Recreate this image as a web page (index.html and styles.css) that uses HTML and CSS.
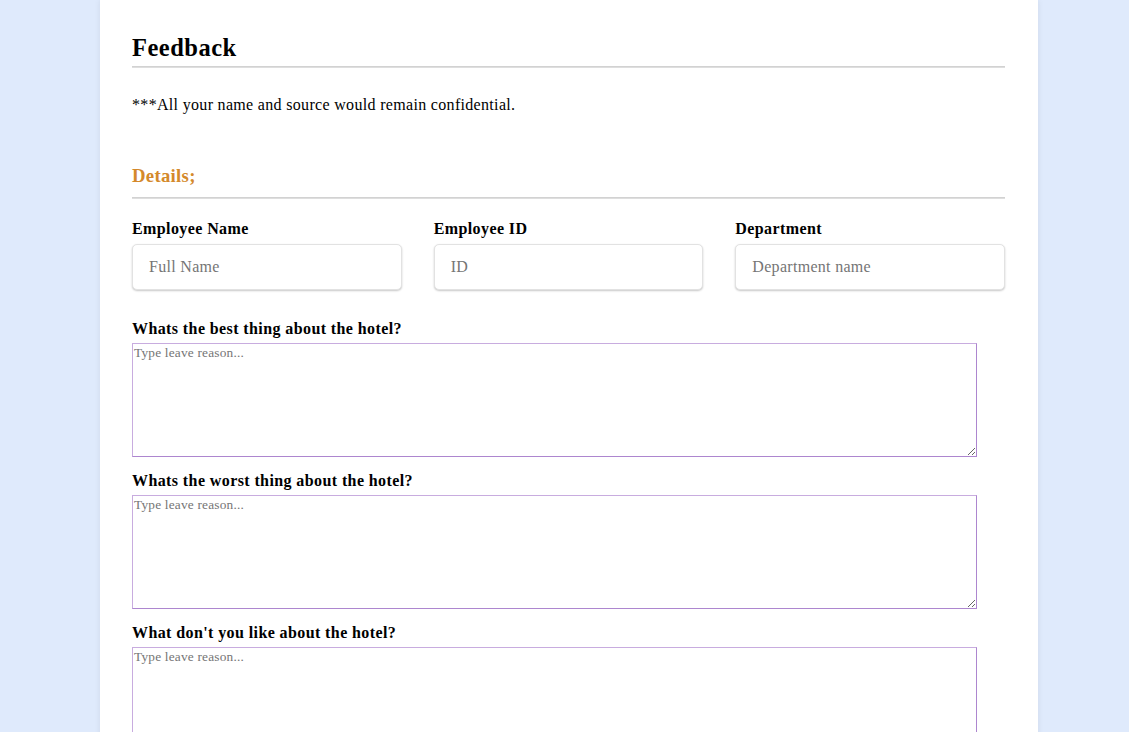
FILE: index.html
```html
<!DOCTYPE html>
<html lang="en">
<head>
<meta charset="utf-8">
<title>Feedback</title>
<link rel="stylesheet" href="styles.css">
</head>
<body>
<div class="page">
  <h2 class="title">Feedback</h2>
  <hr class="rule rule-top">
  <p class="note">***All your name and source would remain confidential.</p>
  <h3 class="section">Details;</h3>
  <hr class="rule rule-section">
  <div class="fields">
    <div class="field">
      <label class="label">Employee Name</label>
      <input class="input" type="text" placeholder="Full Name">
    </div>
    <div class="field">
      <label class="label">Employee ID</label>
      <input class="input" type="text" placeholder="ID">
    </div>
    <div class="field">
      <label class="label">Department</label>
      <input class="input" type="text" placeholder="Department name">
    </div>
  </div>
  <div class="question">
    <label class="label">Whats the best thing about the hotel?</label>
    <textarea class="area" placeholder="Type leave reason..."></textarea>
  </div>
  <div class="question">
    <label class="label">Whats the worst thing about the hotel?</label>
    <textarea class="area" placeholder="Type leave reason..."></textarea>
  </div>
  <div class="question">
    <label class="label">What don't you like about the hotel?</label>
    <textarea class="area" placeholder="Type leave reason..."></textarea>
  </div>
</div>
</body>
</html>
```
FILE: styles.css
```css
html, body {
  margin: 0;
  padding: 0;
}
body {
  background: #dfeafc;
  font-family: "Liberation Serif", "Times New Roman", serif;
  color: #000;
  min-height: 732px;
}
.page {
  box-sizing: border-box;
  width: 938px;
  margin-left: 100px;
  background: #fff;
  padding: 33px 33px 40px 32px;
  box-shadow: 0 0 6px rgba(0, 0, 0, 0.08);
  min-height: 900px;
}
.title {
  margin: 0;
  font-size: 24.5px;
  line-height: 30px;
  font-weight: bold;
  letter-spacing: 0.5px;
}
.rule {
  margin: 0;
  height: 0;
  border: 0;
  border-top: 1px solid #d2d2d2;
  border-bottom: 1px solid #dedede;
}
.rule-top {
  margin-top: 3px;
}
.note {
  margin: 28px 0 0;
  font-size: 16px;
  line-height: 18px;
  letter-spacing: 0.32px;
}
.section {
  margin: 51px 0 0;
  font-size: 18.72px;
  line-height: 21px;
  font-weight: bold;
  color: #d4892b;
  letter-spacing: 0.3px;
}
.rule-section {
  margin-top: 11px;
}
.fields {
  display: grid;
  grid-template-columns: repeat(3, 1fr);
  column-gap: 32px;
  margin-top: 21px;
}
.field {
  display: flex;
  flex-direction: column;
}
.label {
  display: block;
  font-size: 16px;
  line-height: 18px;
  font-weight: bold;
  letter-spacing: 0.4px;
}
.input {
  box-sizing: border-box;
  margin-top: 6px;
  height: 46px;
  width: 100%;
  padding: 0 16px;
  border: 1px solid #e2e2e2;
  border-radius: 5px;
  box-shadow: 0 1px 2px rgba(0, 0, 0, 0.22);
  font-family: "Liberation Serif", "Times New Roman", serif;
  font-size: 16px;
  letter-spacing: 0.3px;
  color: #000;
  background: #fff;
  outline: none;
}
.input::placeholder {
  color: #757575;
}
.question {
  margin-top: 30px;
}
.question + .question {
  margin-top: 15px;
}
.area {
  display: block;
  box-sizing: border-box;
  margin-top: 5px;
  width: 845px;
  height: 114px;
  padding: 1px 1px;
  border: 1px solid #ad86cf;
  border-top-color: #c8acdf;
  border-left-color: #c8acdf;
  font-family: "Liberation Serif", "Times New Roman", serif;
  font-size: 13.33px;
  letter-spacing: 0.2px;
  background: #fff;
  outline: none;
}
.area::placeholder {
  color: #757575;
}
```
